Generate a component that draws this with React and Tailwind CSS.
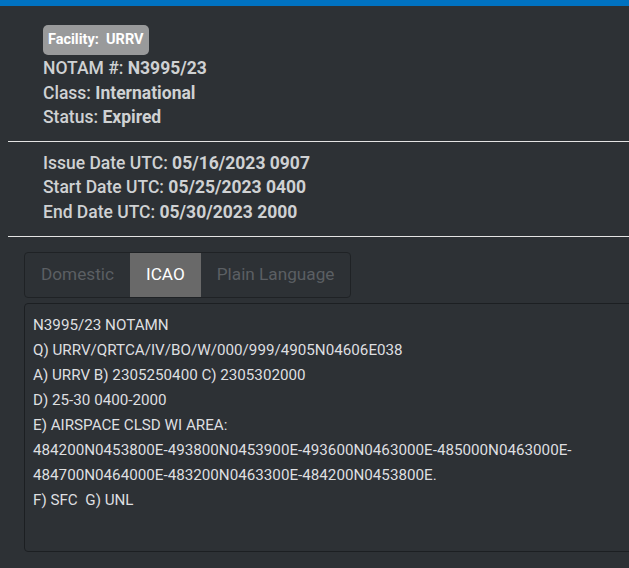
import React, { useState } from "react";

const notamLines = [
  "N3995/23 NOTAMN",
  "Q) URRV/QRTCA/IV/BO/W/000/999/4905N04606E038",
  "A) URRV B) 2305250400 C) 2305302000",
  "D) 25-30 0400-2000",
  "E) AIRSPACE CLSD WI AREA:",
  "484200N0453800E-493800N0453900E-493600N0463000E-485000N0463000E-",
  "484700N0464000E-483200N0463300E-484200N0453800E.",
  "F) SFC\u00a0\u00a0G) UNL",
];

const Field = ({ label, value }) => (
  <p className="text-[17.5px] leading-[24.5px] font-medium text-[#cfd1d3]">
    {label} <span className="font-bold">{value}</span>
  </p>
);

const App = () => {
  const [tab, setTab] = useState("ICAO");
  const tabs = ["Domestic", "ICAO", "Plain Language"];

  return (
    <main
      className="w-[629px] h-[568px] overflow-hidden bg-[#2d3135]"
      style={{ fontFamily: "Roboto, 'Liberation Sans', sans-serif" }}
    >
      <div className="h-[6px] bg-[#0072c1]" />

      <div className="pl-[43px] pt-[19px]">
        <span className="inline-flex items-center h-[30px] px-[5px] rounded-[5px] bg-[#999a9b] text-white text-[14.5px] font-bold">
          Facility:&nbsp; URRV
        </span>
        <div className="mt-[1px]">
          <Field label="NOTAM #:" value="N3995/23" />
          <Field label="Class:" value="International" />
          <Field label="Status:" value="Expired" />
        </div>
      </div>

      <hr className="ml-2 mt-[11px] border-0 border-t border-[#e4e4e4]" />

      <div className="pl-[43px] pt-[9px]">
        <Field label="Issue Date UTC:" value="05/16/2023 0907" />
        <Field label="Start Date UTC:" value="05/25/2023 0400" />
        <Field label="End Date UTC:" value="05/30/2023 2000" />
      </div>

      <hr className="ml-2 mt-[12px] border-0 border-t border-[#e4e4e4]" />

      <div className="pl-6 pt-[15px]">
        <div className="inline-flex h-[46px] rounded-[4px] border border-[#1f2225] overflow-hidden">
          {tabs.map((t) => (
            <button
              key={t}
              onClick={() => setTab(t)}
              className={`px-4 text-[17.2px] ${
                tab === t ? "bg-[#696969] text-white" : "text-[#5b5f63]"
              }`}
            >
              {t}
            </button>
          ))}
        </div>

        <div className="mt-[5px] w-[640px] h-[249px] rounded-[4px] border border-[#1c1f22] px-2 py-[9px]">
          {notamLines.map((line, i) => (
            <p
              key={i}
              className="whitespace-nowrap text-[15.2px] leading-[25px] text-[#dedfe0]"
            >
              {line}
            </p>
          ))}
        </div>
      </div>
    </main>
  );
};

export default App;
